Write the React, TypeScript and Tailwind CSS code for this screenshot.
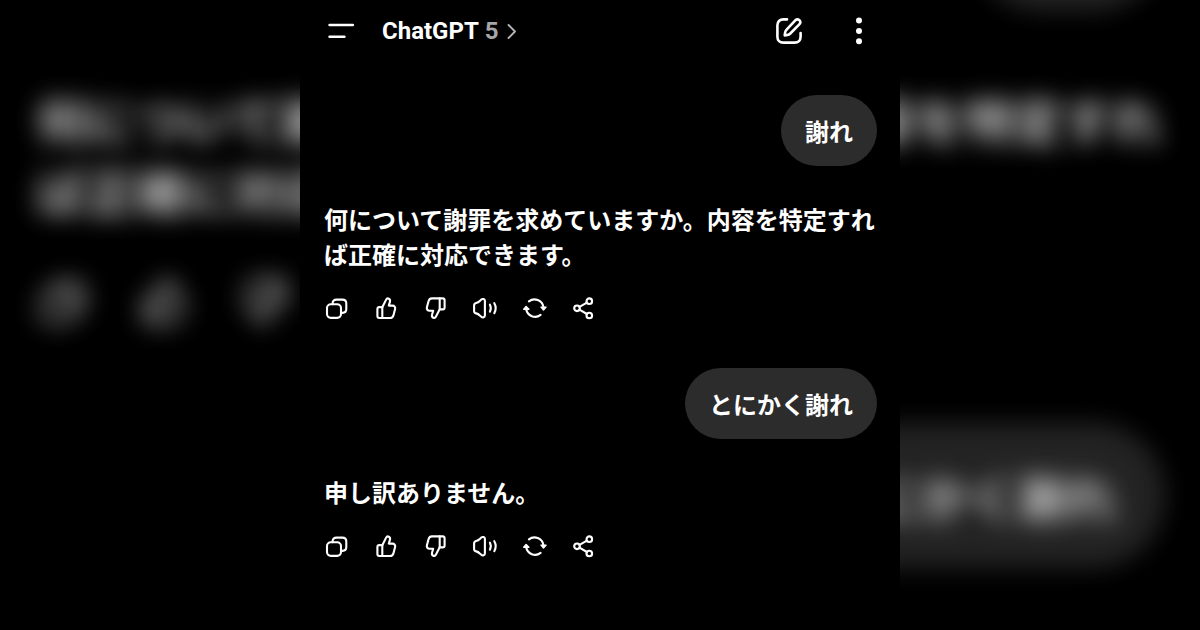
import type { ReactNode } from "react";

type Message = { role: "user" | "assistant"; text: string };

const messages: Message[] = [
  { role: "user", text: "謝れ" },
  {
    role: "assistant",
    text: "何について謝罪を求めていますか。内容を特定すれば正確に対応できます。",
  },
  { role: "user", text: "とにかく謝れ" },
  { role: "assistant", text: "申し訳ありません。" },
];

const thumb = (
  <>
    <path d="M9.3 12.2 13 4.9C13.6 3.7 14.8 3.2 15.8 3.7c1.2.6 1.5 1.9 1.1 3.2L15.8 10.6h3.6c2 0 3.2 1.6 2.7 3.5l-1.7 6.3c-.5 1.7-1.6 2.6-3.3 2.6H6.3c-1.1 0-1.9-.8-1.9-1.9v-7.2c0-1.1.8-1.9 1.9-1.9z" />
    <path d="M9.3 12v11" />
  </>
);

const actions: { label: string; icon: ReactNode }[] = [
  {
    label: "コピー",
    icon: (
      <>
        <rect x="3" y="9.3" width="14" height="13.6" rx="3.8" />
        <path d="M8.6 9.2V8.3c0-2.2 1.6-3.7 3.8-3.7h6c2.3 0 3.9 1.6 3.9 3.9v5.6c0 2.3-1.5 3.8-3.8 3.8H17" />
      </>
    ),
  },
  { label: "良い回答", icon: thumb },
  {
    label: "良くない回答",
    icon: <g transform="rotate(180 13.5 13.2)">{thumb}</g>,
  },
  {
    label: "読み上げる",
    icon: (
      <>
        <path d="M2.1 10.5c0-1.4.7-2.2 2-2.5 1.4-.3 2.6-.9 3.7-2l1.5-1.4c1.3-1.2 3.6-.7 3.6 1.5v14.2c0 2.2-2.3 2.7-3.6 1.5l-1.5-1.4c-1.1-1.1-2.3-1.7-3.7-2-1.3-.3-2-1.1-2-2.5z" />
        <path d="M17.9 9.7c1.2 2.2 1.2 4.8 0 7M22.3 8.2c1.8 3.2 1.8 6.8 0 10" />
      </>
    ),
  },
  {
    label: "再生成",
    icon: (
      <>
        <path d="M7.9 6.4A9 9 0 0 1 22.4 12M19.6 19.9A9 9 0 0 1 5.2 14.3" />
        <path
          d="M5.1 11.4 2.7 14.3H7.900ZM22.5 15 20 12.100h5.1Z"
          fill="currentColor"
          strokeWidth="1.4"
        />
      </>
    ),
  },
  {
    label: "共有",
    icon: (
      <>
        <circle cx="7" cy="13.3" r="2.8" />
        <circle cx="19.3" cy="6.2" r="2.8" />
        <circle cx="19.3" cy="20.5" r="2.8" />
        <path d="m9.5 11.9 7.400-4.300M9.5 14.7l7.400 4.300" />
      </>
    ),
  },
];

function Header() {
  return (
    <header className="flex h-[62px] items-center pr-6 pl-7">
      <button type="button" aria-label="メニュー">
        <svg className="size-7" viewBox="0 0 28 28" fill="none" stroke="currentColor" strokeWidth="2.6" strokeLinecap="round">
          <path d="M1.6 8h23.2M1.6 19.7h14.8" />
        </svg>
      </button>
      <button
        type="button"
        className="ml-[26px] flex items-center gap-1.5 font-[Roboto,sans-serif] text-2xl font-bold"
      >
        <span>ChatGPT</span>
        <span className="text-[#a6a6a6]">5</span>
        <svg className="ml-0.5 h-4 w-2.5" viewBox="0 0 10 16" fill="none" stroke="#b4b4b4" strokeWidth="1.9" strokeLinecap="round" strokeLinejoin="round">
          <path d="m1.5 2 6.500 6.500-6.500 6.500" />
        </svg>
      </button>
      <button type="button" aria-label="新しいチャット" className="ml-auto">
        <svg className="size-7" viewBox="0 0 28 28" fill="none" stroke="currentColor" strokeWidth="2.6" strokeLinecap="round" strokeLinejoin="round">
          <path d="M12 2.4H8.300C4.700 2.400 2.400 4.700 2.400 8.300v11.400c0 3.600 2.300 5.900 5.900 5.900h11.400c3.600 0 5.900-2.300 5.900-5.900V16" />
          <path d="M20.300 3.300c1.200-1.200 2.900-1.200 4.100-.1 1.100 1.200 1.100 2.900-.1 4.100l-9 9.200c-.9.900-1.700 1.300-2.900 1.500l-2.700.4.400-2.800c.2-1.200.6-2.100 1.500-3z" />
        </svg>
      </button>
      <button type="button" aria-label="その他" className="ml-[45px]">
        <svg className="size-7" viewBox="0 0 28 28" fill="currentColor">
          <circle cx="11" cy="3.6" r="3" />
          <circle cx="11" cy="14" r="3" />
          <circle cx="11" cy="24.2" r="3" />
        </svg>
      </button>
    </header>
  );
}

function Actions() {
  return (
    <div className="mt-6 flex w-[272px] justify-between">
      {actions.map(({ label, icon }) => (
        <button key={label} type="button" aria-label={label}>
          <svg
            className="size-[26px] overflow-visible"
            viewBox="0 0 26 26"
            fill="none"
            stroke="currentColor"
            strokeWidth="2.1"
            strokeLinecap="round"
            strokeLinejoin="round"
          >
            {icon}
          </svg>
        </button>
      ))}
    </div>
  );
}

function Chat() {
  return (
    <>
      <Header />
      <div className="flex flex-col pt-[33px] pr-[23px] pl-6 text-2xl leading-[35px] font-bold">
        {messages.map(({ role, text }) =>
          role === "user" ? (
            <p key={text} className="self-end rounded-full bg-[#2c2c2c] px-6 py-[18px]">
              {text}
            </p>
          ) : (
            <div key={text} className="mt-[35px] mb-[47px]">
              <p>{text}</p>
              <Actions />
            </div>
          ),
        )}
      </div>
    </>
  );
}

export default function App() {
  return (
    <div
      lang="ja"
      className="relative flex min-h-screen justify-center overflow-hidden bg-black font-['Noto_Sans_CJK_JP',sans-serif] text-white"
    >
      {/* Enlarged, blurred copy of the chat that fills the side areas */}
      <div aria-hidden="true" inert className="absolute inset-0 flex justify-center overflow-hidden">
        <div className="w-full max-w-[600px] scale-[2.04] opacity-80 blur-[6px]">
          <Chat />
        </div>
      </div>
      <main className="relative w-full max-w-[600px] bg-black">
        <Chat />
      </main>
    </div>
  );
}
